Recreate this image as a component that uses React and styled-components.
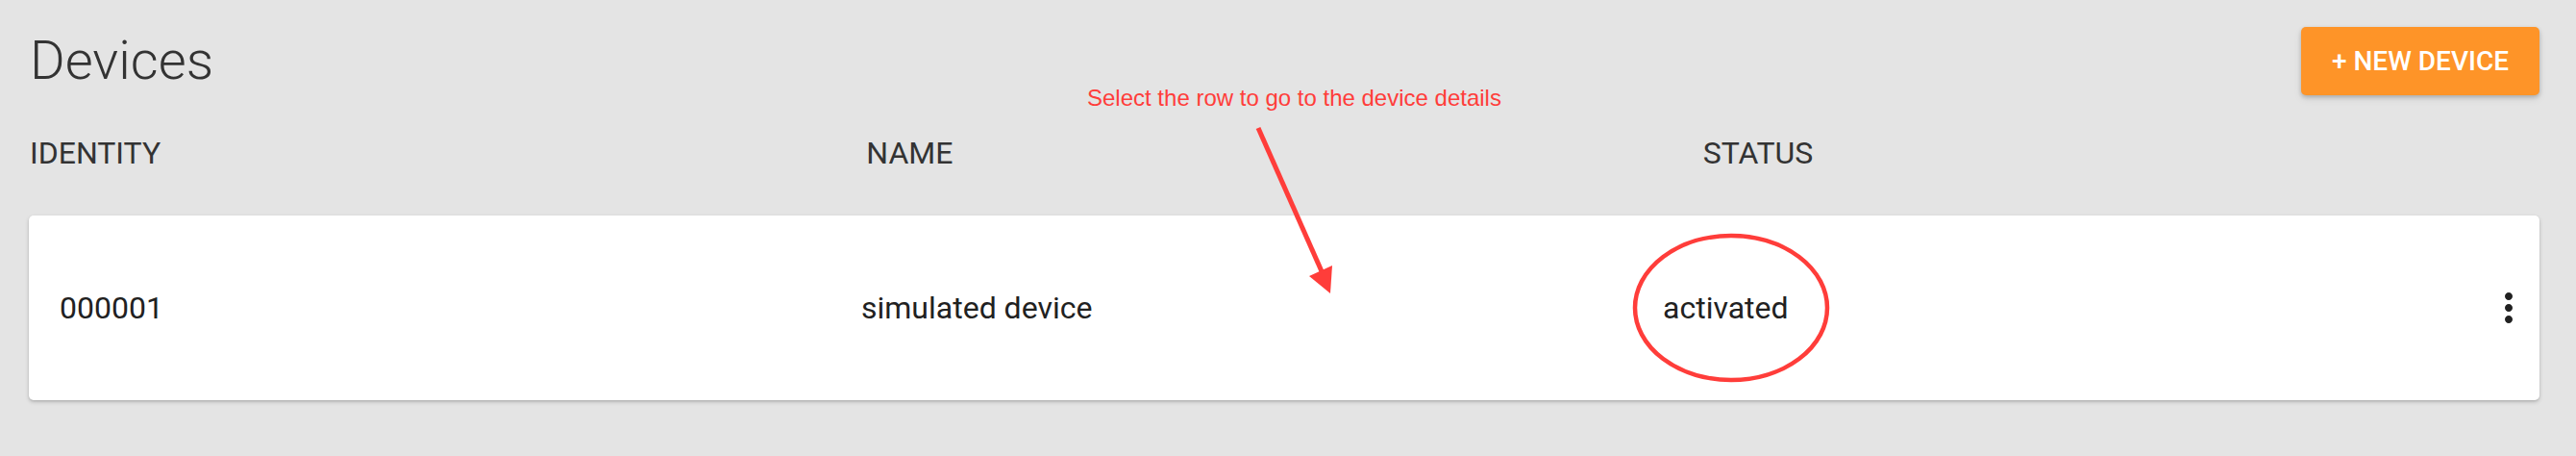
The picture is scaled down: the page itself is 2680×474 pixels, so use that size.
import React from 'react';
import styled, { createGlobalStyle } from 'styled-components';

const GlobalStyle = createGlobalStyle`
  html, body {
    margin: 0;
    padding: 0;
    background: #e4e4e4;
    font-family: Roboto, 'Noto Sans', sans-serif;
  }
`;

const Page = styled.div`
  position: relative;
  min-height: 474px;
  padding: 28px 38px 0 30px;
  box-sizing: border-box;
`;

const TopBar = styled.div`
  display: flex;
  justify-content: space-between;
  align-items: flex-start;
`;

const Title = styled.h1`
  margin: 7px 0 0 1px;
  font-size: 56px;
  line-height: 1;
  font-weight: 300;
  color: #333;
`;

const NewButton = styled.button`
  width: 248px;
  height: 71px;
  padding: 0;
  border: none;
  border-radius: 5px;
  background: #fe9428;
  color: #fff;
  font-family: Roboto, sans-serif;
  font-size: 28px;
  font-weight: 500;
  text-transform: uppercase;
  box-shadow: 0 2px 4px rgba(0, 0, 0, 0.2), 0 4px 8px rgba(0, 0, 0, 0.08);
  cursor: pointer;
`;

const HeaderRow = styled.div`
  display: grid;
  grid-template-columns: repeat(3, 1fr);
  margin-top: 44px;
  padding-left: 1px;
`;

const HeaderCell = styled.div`
  font-size: 32px;
  line-height: 1;
  color: #333;
  text-transform: uppercase;
`;

const Card = styled.div`
  display: grid;
  grid-template-columns: 834px 834px 1fr auto;
  align-items: center;
  height: 192px;
  margin-top: 49px;
  padding: 0 8px 0 32px;
  background: #fff;
  border-radius: 5px;
  box-shadow: 0 2px 4px rgba(0, 0, 0, 0.18), 0 1px 2px rgba(0, 0, 0, 0.1);
  cursor: pointer;
`;

const Cell = styled.div`
  font-size: 32px;
  line-height: 1;
  color: #212121;
`;

const MenuButton = styled.div`
  display: flex;
  width: 48px;
  height: 48px;
  color: #212121;
`;

const Note = styled.div`
  position: absolute;
  left: 1131px;
  top: 90px;
  font-family: 'Liberation Sans', Arial, sans-serif;
  font-size: 24px;
  line-height: 1;
  color: #ff3d3a;
  pointer-events: none;
`;

const Overlay = styled.svg`
  position: absolute;
  left: 0;
  top: 0;
  pointer-events: none;
`;

const MoreVert = () => (
  <svg width="48" height="48" viewBox="0 0 24 24" fill="currentColor">
    <path d="M12 8c1.1 0 2-.9 2-2s-.9-2-2-2-2 .9-2 2 .9 2 2 2zm0 2c-1.1 0-2 .9-2 2s.9 2 2 2 2-.9 2-2-.9-2-2-2zm0 6c-1.1 0-2 .9-2 2s.9 2 2 2 2-.9 2-2-.9-2-2-2z" />
  </svg>
);

const device = { identity: '000001', name: 'simulated device', status: 'activated' };

const App = () => (
  <Page>
    <GlobalStyle />
    <TopBar>
      <Title>Devices</Title>
      <NewButton>+ New Device</NewButton>
    </TopBar>
    <HeaderRow>
      <HeaderCell>Identity</HeaderCell>
      <HeaderCell>Name</HeaderCell>
      <HeaderCell>Status</HeaderCell>
    </HeaderRow>
    <Card>
      <Cell>{device.identity}</Cell>
      <Cell>{device.name}</Cell>
      <Cell>{device.status}</Cell>
      <MenuButton>
        <MoreVert />
      </MenuButton>
    </Card>

    {/* annotation layer */}
    <Note>Select the row to go to the device details</Note>
    <Overlay width="2680" height="474">
      <line x1="1309" y1="133" x2="1375" y2="282" stroke="#ff3d3a" strokeWidth="5" />
      <polygon points="1362,287 1386,276 1384,305" fill="#ff3d3a" />
      <ellipse cx="1801" cy="320" rx="100" ry="75" fill="none" stroke="#ff3d3a" strokeWidth="4.5" />
    </Overlay>
  </Page>
);

export default App;
